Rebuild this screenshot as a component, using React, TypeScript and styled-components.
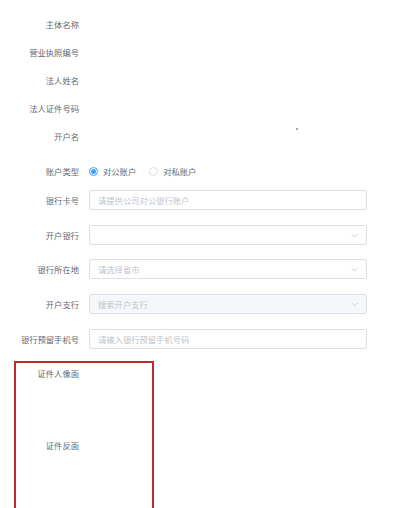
import React from "react";
import styled, { createGlobalStyle } from "styled-components";

const GlobalStyle = createGlobalStyle`
  html, body {
    margin: 0;
    padding: 0;
    background: #fff;
    overflow: hidden;
  }
  body {
    font-family: "Noto Sans CJK SC", "Noto Sans", sans-serif;
    font-size: 8.3px;
    color: #666a70;
  }
`;

const Form = styled.div`
  width: 411px;
  padding-top: 10px;
`;

const Row = styled.div<{ $h: number; $mb?: number; $mt?: number }>`
  display: flex;
  align-items: center;
  height: ${(p) => p.$h}px;
  margin-top: ${(p) => p.$mt || 0}px;
  margin-bottom: ${(p) => p.$mb || 0}px;
`;

const Label = styled.div<{ $w?: number }>`
  width: ${(p) => p.$w || 79}px;
  flex-shrink: 0;
  text-align: right;
  line-height: 20px;
  white-space: nowrap;
`;

const Content = styled.div`
  margin-left: 10px;
  display: flex;
  align-items: center;
  height: 100%;
`;

const Input = styled.div<{ $disabled?: boolean }>`
  box-sizing: border-box;
  width: 278px;
  height: 20px;
  border: 1px solid #dcdfe6;
  border-radius: 2px;
  background: ${(p) => (p.$disabled ? "#f5f7fa" : "#fff")};
  display: flex;
  align-items: center;
  justify-content: space-between;
  padding: 0 8px 0 8px;
`;

const Placeholder = styled.span`
  color: #c0c4cc;
`;

const RadioGroup = styled.div`
  display: flex;
  align-items: center;
  gap: 13px;
`;

const RadioItem = styled.label`
  display: flex;
  align-items: center;
  gap: 5px;
`;

const RadioDot = styled.span<{ $on?: boolean }>`
  box-sizing: border-box;
  width: 9px;
  height: 9px;
  border-radius: 50%;
  border: 1px solid ${(p) => (p.$on ? "#409eff" : "#dcdfe6")};
  display: flex;
  align-items: center;
  justify-content: center;
  &::after {
    content: "";
    width: 5px;
    height: 5px;
    border-radius: 50%;
    background: ${(p) => (p.$on ? "#409eff" : "transparent")};
  }
`;

const Speck = styled.span`
  display: inline-block;
  width: 2px;
  height: 2px;
  border-radius: 1px;
  background: #8a8a8a;
  margin-left: 207px;
  margin-top: -14px;
`;

const UploadBox = styled.div`
  margin: 12px 0 0 14px;
  width: 140px;
  height: 170px;
  box-sizing: border-box;
  border: 2px solid #c0282e;
`;

const UploadRow = styled.div`
  height: 72px;
  display: flex;
  align-items: flex-start;
`;

const Chevron = () => (
  <svg width="7" height="5" viewBox="0 0 7 5" fill="none">
    <path d="M0.5 0.8 L3.5 3.8 L6.5 0.8" stroke="#c0c4cc" strokeWidth="0.8" />
  </svg>
);

const textRows = ["主体名称", "营业执照编号", "法人姓名", "法人证件号码"];

const App: React.FC = () => {
  return (
    <>
      <GlobalStyle />
      <Form>
        {textRows.map((t) => (
          <Row key={t} $h={28}>
            <Label>{t}</Label>
          </Row>
        ))}
        <Row $h={28}>
          <Label>开户名</Label>
          <Content>
            <Speck />
          </Content>
        </Row>
        <Row $h={20} $mt={11} $mb={9}>
          <Label>账户类型</Label>
          <Content>
            <RadioGroup>
              <RadioItem>
                <RadioDot $on />
                对公账户
              </RadioItem>
              <RadioItem>
                <RadioDot />
                对私账户
              </RadioItem>
            </RadioGroup>
          </Content>
        </Row>
        <Row $h={20} $mb={15}>
          <Label>银行卡号</Label>
          <Content>
            <Input>
              <Placeholder>请提供公司对公银行账户</Placeholder>
            </Input>
          </Content>
        </Row>
        <Row $h={20} $mb={14}>
          <Label>开户银行</Label>
          <Content>
            <Input>
              <span />
              <Chevron />
            </Input>
          </Content>
        </Row>
        <Row $h={20} $mb={15}>
          <Label>银行所在地</Label>
          <Content>
            <Input>
              <Placeholder>请选择省市</Placeholder>
              <Chevron />
            </Input>
          </Content>
        </Row>
        <Row $h={20} $mb={15}>
          <Label>开户支行</Label>
          <Content>
            <Input $disabled>
              <Placeholder>搜索开户支行</Placeholder>
              <Chevron />
            </Input>
          </Content>
        </Row>
        <Row $h={20}>
          <Label>银行预留手机号</Label>
          <Content>
            <Input>
              <Placeholder>请输入银行预留手机号码</Placeholder>
            </Input>
          </Content>
        </Row>
        <UploadBox>
          <UploadRow>
            <Label $w={63}>证件人像面</Label>
          </UploadRow>
          <UploadRow>
            <Label $w={63}>证件反面</Label>
          </UploadRow>
        </UploadBox>
      </Form>
    </>
  );
};

export default App;
